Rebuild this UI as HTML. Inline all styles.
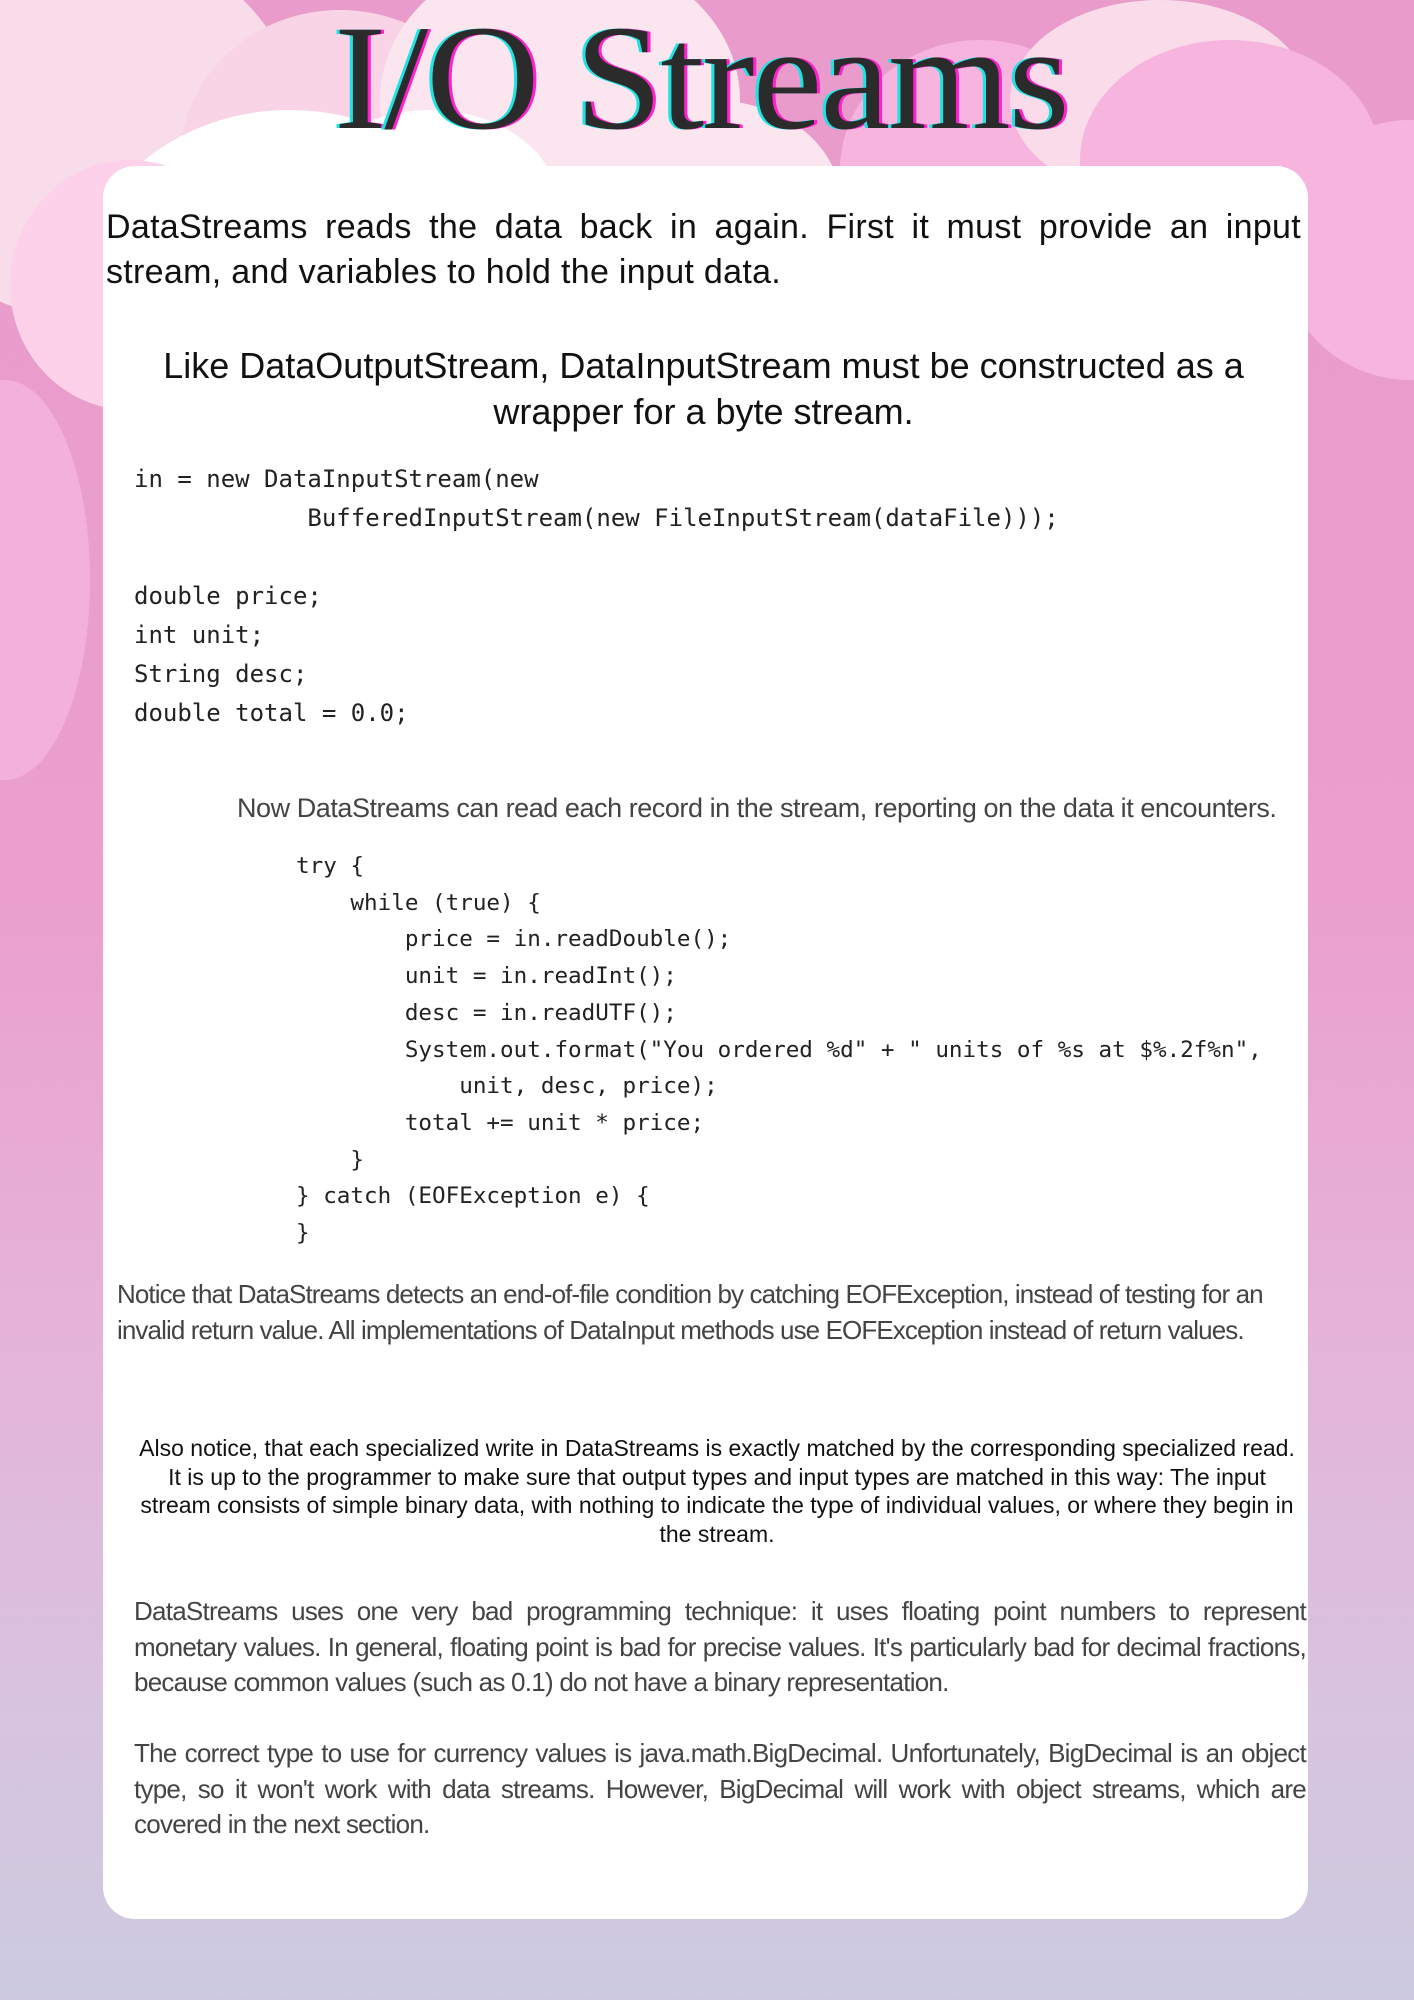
<!DOCTYPE html>
<html><head><meta charset="utf-8"><style>
*{margin:0;padding:0;box-sizing:border-box}
body{width:1414px;height:2000px;position:relative;overflow:hidden;font-family:"Liberation Sans",sans-serif;
background:linear-gradient(180deg,#e99ccb 0%,#ea9fce 45%,#e6b2d8 65%,#d8c3de 85%,#cccbdf 100%);}
.c{position:absolute;border-radius:50%}
.card{position:absolute;left:103px;top:166px;width:1205px;height:1753px;background:#fff;border-radius:32px}
.t{position:absolute;white-space:nowrap}
.mono{font-family:"DejaVu Sans Mono","Liberation Mono",monospace;color:#222;font-size:22.6px;position:absolute;white-space:pre;line-height:36.7px}
.light{color:#444;font-size:26px;letter-spacing:-0.9px;position:absolute}
</style></head><body>
<div class="c" style="left:-120px;top:-60px;width:420px;height:380px;background:#f8dce9"></div>
<div class="c" style="left:180px;top:10px;width:320px;height:300px;background:#f8d4e6"></div>
<div class="c" style="left:380px;top:-50px;width:360px;height:300px;background:#fbe6ef"></div>
<div class="c" style="left:80px;top:110px;width:420px;height:360px;background:#fff"></div>
<div class="c" style="left:10px;top:160px;width:240px;height:250px;background:#fdd1ea"></div>
<div class="c" style="left:-80px;top:380px;width:170px;height:400px;background:#f3b0db"></div>
<div class="c" style="left:300px;top:110px;width:260px;height:200px;background:#fff"></div>
<div class="c" style="left:580px;top:100px;width:260px;height:200px;background:#fbe6ef"></div>
<div class="c" style="left:840px;top:40px;width:280px;height:260px;background:#f6b4df"></div>
<div class="c" style="left:1010px;top:0px;width:300px;height:200px;background:#f9dbe9"></div>
<div class="c" style="left:1080px;top:40px;width:300px;height:240px;background:#f6b4df"></div>
<div class="c" style="left:1280px;top:120px;width:260px;height:260px;background:#f6b4df"></div>
<div class="card"></div>
<div class="t" style="left:334px;top:-8px;font-family:'Liberation Serif',serif;font-size:150px;color:#2b2b2b;transform:scaleX(1.05);transform-origin:left top;letter-spacing:-2px;text-shadow:-3px 0 #1de3e3,3px 0 #ff22cc">I/O Streams</div>
<div class="t" style="left:106px;top:205px;font-size:34px;letter-spacing:0.3px;color:#111;line-height:45px;white-space:normal;width:1195px;text-align:justify;text-align-last:left">DataStreams reads the data back in again. First it must provide an input stream, and variables to hold the input data.</div>
<div class="t" style="left:106px;top:343px;font-size:36px;color:#111;line-height:46px;white-space:normal;width:1195px;text-align:center">Like DataOutputStream, DataInputStream must be constructed as a<br>wrapper for a byte stream.</div>
<div class="mono" style="left:134px;top:460px;line-height:39px;font-size:24px">in = new DataInputStream(new
            BufferedInputStream(new FileInputStream(dataFile)));

double price;
int unit;
String desc;
double total = 0.0;</div>
<div class="light t" style="left:237px;top:793px;font-size:27px;letter-spacing:-0.45px">Now DataStreams can read each record in the stream, reporting on the data it encounters.</div>
<div class="mono" style="left:296px;top:848px">try {
    while (true) {
        price = in.readDouble();
        unit = in.readInt();
        desc = in.readUTF();
        System.out.format("You ordered %d" + " units of %s at $%.2f%n",
            unit, desc, price);
        total += unit * price;
    }
} catch (EOFException e) {
}</div>
<div class="light" style="left:117px;top:1276px;width:1190px;line-height:36px">Notice that DataStreams detects an end-of-file condition by catching EOFException, instead of testing for an invalid return value. All implementations of DataInput methods use EOFException instead of return values.</div>
<div class="t" style="left:131px;top:1434px;width:1172px;white-space:normal;text-align:center;font-size:23px;line-height:28.6px;color:#111;letter-spacing:0px">Also notice, that each specialized write in DataStreams is exactly matched by the corresponding specialized read.<br>It is up to the programmer to make sure that output types and input types are matched in this way: The input stream consists of simple binary data, with nothing to indicate the type of individual values, or where they begin in the stream.</div>
<div class="light" style="left:134px;top:1594px;width:1172px;line-height:35.7px;text-align:justify;font-size:26px;letter-spacing:-0.75px">DataStreams uses one very bad programming technique: it uses floating point numbers to represent monetary values. In general, floating point is bad for precise values. It's particularly bad for decimal fractions, because common values (such as 0.1) do not have a binary representation.</div>
<div class="light" style="left:134px;top:1736px;width:1172px;line-height:35.7px;text-align:justify;font-size:26px;letter-spacing:-0.75px">The correct type to use for currency values is java.math.BigDecimal. Unfortunately, BigDecimal is an object type, so it won't work with data streams. However, BigDecimal will work with object streams, which are covered in the next section.</div>
</body></html>
